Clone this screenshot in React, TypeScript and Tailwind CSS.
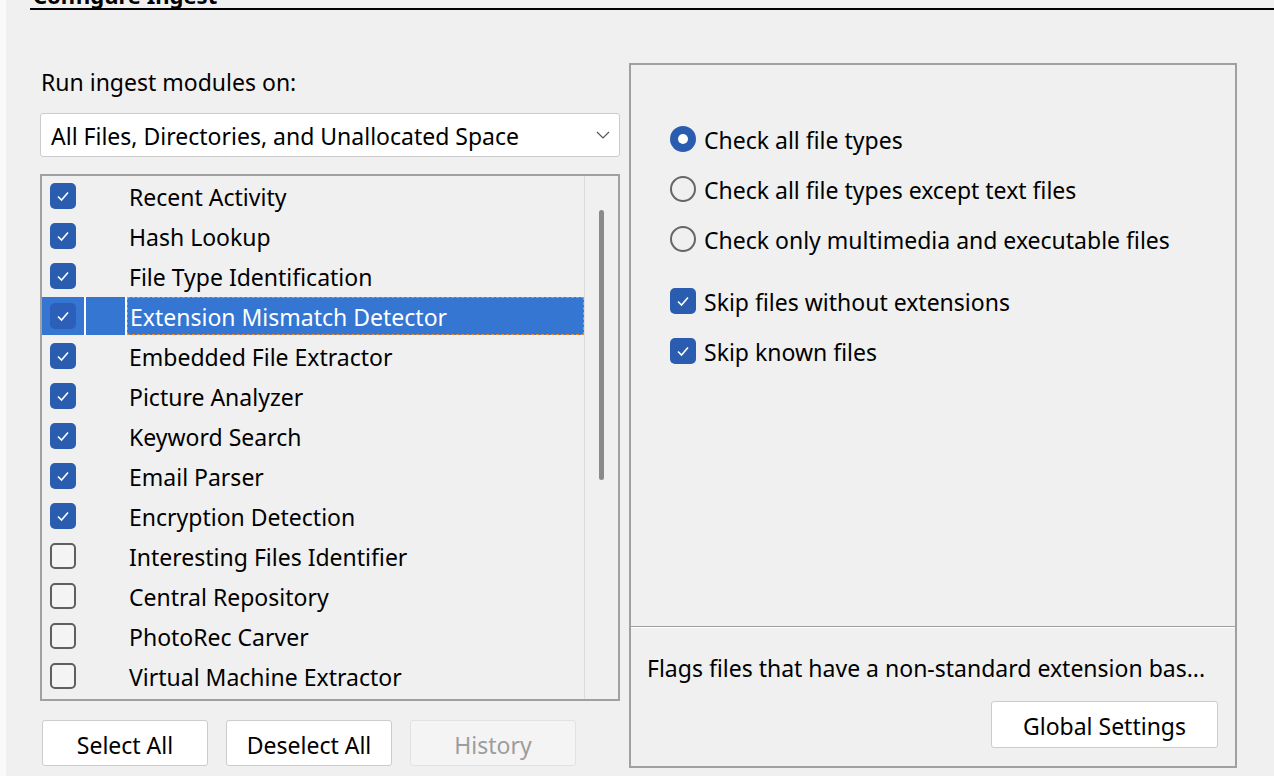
import React from 'react'

const modules = [
  { name: 'Recent Activity', on: true },
  { name: 'Hash Lookup', on: true },
  { name: 'File Type Identification', on: true },
  { name: 'Extension Mismatch Detector', on: true, selected: true },
  { name: 'Embedded File Extractor', on: true },
  { name: 'Picture Analyzer', on: true },
  { name: 'Keyword Search', on: true },
  { name: 'Email Parser', on: true },
  { name: 'Encryption Detection', on: true },
  { name: 'Interesting Files Identifier', on: false },
  { name: 'Central Repository', on: false },
  { name: 'PhotoRec Carver', on: false },
  { name: 'Virtual Machine Extractor', on: false },
]

const font = { fontFamily: '"Noto Sans", "Open Sans", sans-serif' }

function Check({ on, dark }: { on: boolean; dark?: boolean }) {
  if (!on) {
    return <div className="w-[26px] h-[26px] shrink-0 rounded-[5px] border-2 border-[#5f5f5f] bg-[#f4f4f4]" />
  }
  return (
    <div className={`w-[26px] h-[26px] shrink-0 rounded-[5px] flex items-center justify-center ${dark ? 'bg-[#2c5fb8]' : 'bg-[#2a5db0]'}`}>
      <svg width="26" height="26" viewBox="0 0 26 26">
        <polyline points="8,13.5 11.5,17 18,9.5" fill="none" stroke="white" strokeWidth="1.6" />
      </svg>
    </div>
  )
}

function Radio({ on }: { on: boolean }) {
  if (on) {
    return (
      <div className="w-[26px] h-[26px] shrink-0 rounded-full bg-[#2a5db0] flex items-center justify-center">
        <div className="w-[10px] h-[10px] rounded-full bg-white" />
      </div>
    )
  }
  return <div className="w-[26px] h-[26px] shrink-0 rounded-full border-2 border-[#666666]" />
}

export default function App() {
  return (
    <div className="w-[1274px] h-[776px] bg-[#fafafa] flex overflow-hidden text-black text-[23px]" style={font}>
      <div className="w-[6px] shrink-0" />
      <div className="flex-1 bg-[#f0f0f0] flex flex-col">
        <div className="ml-[24px] h-[10px] border-b-2 border-black">
          <div className="-mt-[17px] ml-[3px] text-[22px] leading-[24px] font-bold">Configure Ingest</div>
        </div>

        <div className="flex mt-[53px]">
          {/* left column */}
          <div className="ml-[34px] w-[580px] pt-[7px] flex flex-col">
            <div className="ml-[1px] leading-[24px]">Run ingest modules on:</div>
            <div className="mt-[19px] h-[44px] bg-white border border-[#cccccc] rounded-[3px] flex items-center pl-[10px] pr-[9px]">
              <span className="flex-1 pt-[3px]">All Files, Directories, and Unallocated Space</span>
              <svg width="14" height="8" viewBox="0 0 14 8">
                <polyline points="1,1 7,7 13,1" fill="none" stroke="#555" strokeWidth="1.2" />
              </svg>
            </div>

            <div className="mt-[17px] h-[527px] border-2 border-[#a0a0a0] flex">
              <div className="w-[542px] flex flex-col">
                {modules.map((m) =>
                  m.selected ? (
                    <div key={m.name} className="h-[40px] flex items-stretch py-[1px]">
                      <div className="w-[42px] bg-[#3476d2] flex items-center pl-[8px]">
                        <Check on={m.on} dark />
                      </div>
                      <div className="w-[2px] bg-white" />
                      <div className="w-[39px] bg-[#3476d2]" />
                      <div className="w-[2px] bg-white" />
                      <div className="flex-1 bg-[#3476d2] border border-dashed border-[#f08a24] flex items-center pl-[2px] pt-[3px] text-white whitespace-nowrap overflow-hidden">
                        {m.name}
                      </div>
                    </div>
                  ) : (
                    <div key={m.name} className="h-[40px] flex items-center">
                      <div className="w-[42px] pl-[8px] flex items-center">
                        <Check on={m.on} />
                      </div>
                      <div className="w-[45px]" />
                      <div className="pt-[3px] whitespace-nowrap">{m.name}</div>
                    </div>
                  )
                )}
              </div>
              <div className="flex-1 border-l border-[#dcdcdc] relative">
                <div className="absolute left-[14px] top-[34px] w-[5px] h-[270px] rounded-full bg-[#8a8a8a]" />
              </div>
            </div>

            <div className="mt-[19px] ml-[2px] flex gap-[18px]">
              <button className="w-[166px] h-[46px] pt-[5px] bg-white border border-[#cccccc] rounded-[3px]">Select All</button>
              <button className="w-[166px] h-[46px] pt-[5px] bg-white border border-[#cccccc] rounded-[3px]">Deselect All</button>
              <button className="w-[166px] h-[46px] pt-[5px] bg-[#f4f4f4] border border-[#e2e2e2] rounded-[3px] text-[#9d9d9d]">History</button>
            </div>
          </div>

          {/* right panel */}
          <div className="ml-[9px] w-[608px] h-[705px] border-2 border-[#a0a0a0] flex flex-col">
            <div className="flex-1 pl-[39px] pt-[49px] flex flex-col">
              {[
                ['Check all file types', true],
                ['Check all file types except text files', false],
                ['Check only multimedia and executable files', false],
              ].map(([label, on]) => (
                <div key={label as string} className="h-[50px] flex items-center gap-[8px]">
                  <Radio on={on as boolean} />
                  <span className="pt-[3px]">{label}</span>
                </div>
              ))}
              <div className="mt-[12px]" />
              {['Skip files without extensions', 'Skip known files'].map((label) => (
                <div key={label} className="h-[50px] flex items-center gap-[8px]">
                  <Check on />
                  <span className="pt-[3px]">{label}</span>
                </div>
              ))}
            </div>
            <div className="h-[1px] bg-[#a0a0a0]" />
            <div className="h-[1px] bg-white" />
            <div className="h-[138px] pl-[16px] pr-[17px] pt-[28px] flex flex-col">
              <div className="leading-[24px] whitespace-nowrap">Flags files that have a non-standard extension bas...</div>
              <div className="mt-[21px] flex justify-end">
                <button className="w-[227px] h-[47px] pt-[4px] bg-white border border-[#cccccc] rounded-[3px]">Global Settings</button>
              </div>
            </div>
          </div>
        </div>
      </div>
    </div>
  )
}
